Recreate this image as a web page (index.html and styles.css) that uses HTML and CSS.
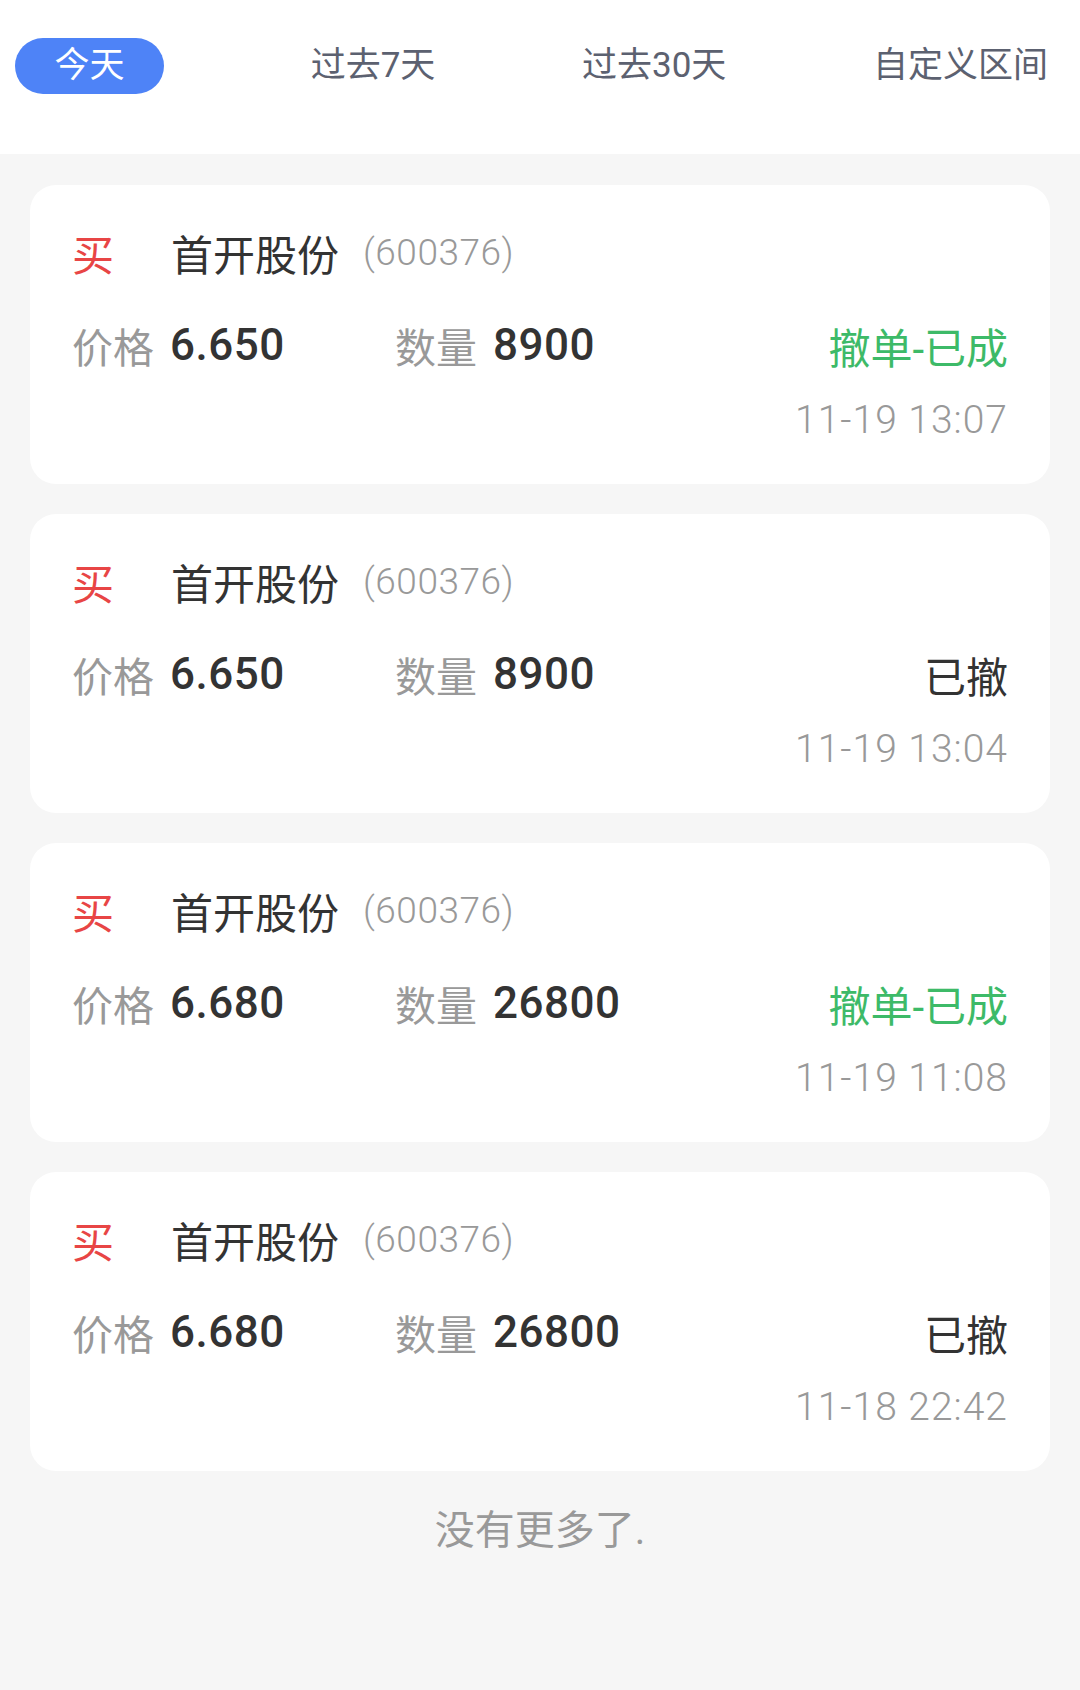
FILE: index.html
```html
<!DOCTYPE html>
<html lang="zh-CN">
<head>
<meta charset="utf-8">
<title>委托记录</title>
<link rel="stylesheet" href="styles.css">
</head>
<body>
<header class="tabs">
  <div class="tab tab-active">今天</div>
  <div class="tab">过去7天</div>
  <div class="tab">过去30天</div>
  <div class="tab">自定义区间</div>
</header>
<main class="list">
  <section class="card">
    <div class="row-title"><span class="side">买</span><span class="name">首开股份</span><span class="code">(600376)</span></div>
    <div class="row-info">
      <div class="cell cell-price"><span class="label">价格</span><span class="val">6.650</span></div>
      <div class="cell"><span class="label">数量</span><span class="val">8900</span></div>
      <div class="status status-green">撤单-已成</div>
    </div>
    <div class="time">11-19 13:07</div>
  </section>
  <section class="card">
    <div class="row-title"><span class="side">买</span><span class="name">首开股份</span><span class="code">(600376)</span></div>
    <div class="row-info">
      <div class="cell cell-price"><span class="label">价格</span><span class="val">6.650</span></div>
      <div class="cell"><span class="label">数量</span><span class="val">8900</span></div>
      <div class="status">已撤</div>
    </div>
    <div class="time">11-19 13:04</div>
  </section>
  <section class="card">
    <div class="row-title"><span class="side">买</span><span class="name">首开股份</span><span class="code">(600376)</span></div>
    <div class="row-info">
      <div class="cell cell-price"><span class="label">价格</span><span class="val">6.680</span></div>
      <div class="cell"><span class="label">数量</span><span class="val">26800</span></div>
      <div class="status status-green">撤单-已成</div>
    </div>
    <div class="time">11-19 11:08</div>
  </section>
  <section class="card">
    <div class="row-title"><span class="side">买</span><span class="name">首开股份</span><span class="code">(600376)</span></div>
    <div class="row-info">
      <div class="cell cell-price"><span class="label">价格</span><span class="val">6.680</span></div>
      <div class="cell"><span class="label">数量</span><span class="val">26800</span></div>
      <div class="status">已撤</div>
    </div>
    <div class="time">11-18 22:42</div>
  </section>
  <div class="no-more">没有更多了.</div>
</main>
</body>
</html>
```

FILE: styles.css
```css
html, body {
  margin: 0;
  padding: 0;
}
body {
  background: #f6f6f6;
  font-family: Roboto, "Noto Sans CJK SC", sans-serif;
  color: #333333;
}
.tabs {
  background: #ffffff;
  height: 154px;
  box-sizing: border-box;
  padding: 38px 32px 0 15px;
  display: flex;
  justify-content: space-between;
  align-items: flex-start;
}
.tab {
  height: 56px;
  line-height: 56px;
  font-size: 35px;
  color: #5c6170;
  white-space: nowrap;
}
.tab-active {
  width: 149px;
  text-align: center;
  border-radius: 28px;
  background: #4e83f7;
  color: #ffffff;
}
.list {
  padding: 31px 30px 0 30px;
  display: flex;
  flex-direction: column;
  gap: 30px;
}
.card {
  background: #ffffff;
  border-radius: 26px;
  padding: 42px 42px 42px 42px;
}
.row-title {
  height: 50px;
  display: flex;
  align-items: center;
  white-space: nowrap;
}
.side {
  font-size: 42px;
  color: #e84545;
  width: 99px;
}
.name {
  font-size: 42px;
  color: #333333;
}
.code {
  font-size: 37px;
  color: #999999;
  margin-left: 24px;
  font-weight: 300;
  letter-spacing: 0.5px;
}
.row-info {
  margin-top: 40px;
  height: 56px;
  display: flex;
  align-items: center;
  white-space: nowrap;
}
.cell {
  display: flex;
  align-items: center;
}
.cell-price {
  width: 323px;
}
.label {
  font-size: 41px;
  color: #999999;
  margin-right: 16px;
}
.val {
  font-size: 44px;
  font-weight: 500;
  color: #333333;
  letter-spacing: 0.5px;
}
.status {
  margin-left: auto;
  font-size: 42px;
  color: #333333;
}
.status-green {
  color: #3dba68;
}
.time {
  margin-top: 25px;
  height: 44px;
  line-height: 44px;
  text-align: right;
  font-size: 39px;
  color: #999999;
  letter-spacing: 1px;
  font-weight: 300;
}
.no-more {
  text-align: center;
  font-size: 40px;
  color: #999999;
  line-height: 60px;
  margin-top: 0;
}
```
